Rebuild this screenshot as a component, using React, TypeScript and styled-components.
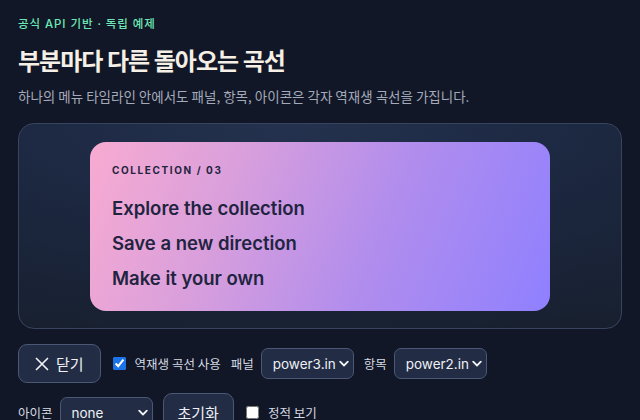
import React, { useState } from "react";
import styled, { createGlobalStyle } from "styled-components";

const Global = createGlobalStyle`
  html, body { margin: 0; padding: 0; background: #111726; }
  body {
    font-family: Inter, "Noto Sans CJK KR", "Noto Sans", sans-serif;
    color: #e5e7eb;
  }
  * { box-sizing: border-box; }
`;

const Page = styled.main`
  padding: 16px 18px 24px;
  display: flex;
  flex-direction: column;
`;

const Eyebrow = styled.div`
  font-size: 11.5px;
  line-height: 16px;
  font-weight: 500;
  letter-spacing: 0.08em;
  color: #6ee7b7;
`;

const Title = styled.h1`
  margin: 12px 0 0;
  font-size: 24px;
  line-height: 32px;
  font-weight: 700;
  letter-spacing: -0.04em;
  color: #f5efe6;
  font-family: "Noto Sans CJK KR", Inter, sans-serif;
`;

const Subtitle = styled.p`
  margin: 10px 0 0;
  font-size: 13.5px;
  line-height: 20px;
  color: #a4aaba;
  letter-spacing: 0;
  font-family: "Noto Sans CJK KR", Inter, sans-serif;
`;

const Stage = styled.section`
  margin-top: 17px;
  height: 206px;
  border: 1px solid #37445e;
  border-radius: 16px;
  background: radial-gradient(120% 110% at 45% 0%, #24324f 0%, #1c2740 45%, #18202f 100%);
  display: flex;
  align-items: center;
  justify-content: center;
`;

const Card = styled.div`
  width: 460px;
  height: 169px;
  border-radius: 16px;
  padding: 20px 22px;
  background: linear-gradient(112deg, #f8abd1 0%, #d99fdc 30%, #b18ded 62%, #8f80ff 100%);
  color: #1f2440;
  display: flex;
  flex-direction: column;
`;

const CardLabel = styled.div`
  font-family: Inter, sans-serif;
  font-size: 10px;
  line-height: 16px;
  font-weight: 700;
  letter-spacing: 0.16em;
`;

const ItemList = styled.ul`
  list-style: none;
  margin: 17px 0 0;
  padding: 0;
  display: flex;
  flex-direction: column;
  gap: 9px;
`;

const Item = styled.li`
  font-family: Inter, sans-serif;
  font-size: 18.5px;
  line-height: 26px;
  font-weight: 600;
  letter-spacing: 0;
`;

const Controls = styled.div`
  margin-top: 15px;
  display: flex;
  flex-wrap: wrap;
  align-items: center;
  column-gap: 10px;
  row-gap: 10px;
  font-family: "Noto Sans CJK KR", Inter, sans-serif;
`;

const Button = styled.button<{ $pad?: number }>`
  height: 39px;
  padding: 0 ${(p) => p.$pad ?? 16}px;
  border-radius: 9px;
  border: 1px solid #4a5775;
  background: #222c44;
  color: #eef0f4;
  font-family: "Noto Sans CJK KR", Inter, sans-serif;
  font-size: 15px;
  display: inline-flex;
  align-items: center;
  gap: 7px;
  cursor: pointer;
`;

const CheckLabel = styled.label`
  display: inline-flex;
  align-items: center;
  gap: 9px;
  font-size: 12.5px;
  color: #d5d9e2;
`;

const Check = styled.input`
  width: 13px;
  height: 13px;
  margin: 0 0 0 2px;
  accent-color: #1a73e8;
`;

const Field = styled.label`
  display: inline-flex;
  align-items: center;
  gap: 7px;
  font-size: 12.5px;
  color: #d5d9e2;
`;

const SelectWrap = styled.span`
  position: relative;
  display: inline-flex;
`;

const Select = styled.select`
  appearance: none;
  width: 93px;
  height: 31px;
  padding: 0 16px 0 11px;
  border-radius: 7px;
  border: 1px solid #4a5775;
  background: #222c44;
  color: #eef0f4;
  font-family: Inter, "Liberation Sans", sans-serif;
  font-size: 13.5px;
`;

const Chevron = styled.svg`
  position: absolute;
  right: 5px;
  top: 50%;
  transform: translateY(-50%);
  pointer-events: none;
`;

function Dropdown({ value, options }: { value: string; options: string[] }) {
  const [v, setV] = useState(value);
  return (
    <SelectWrap>
      <Select value={v} onChange={(e) => setV(e.target.value)}>
        {options.map((o) => (
          <option key={o} value={o}>
            {o}
          </option>
        ))}
      </Select>
      <Chevron width="10" height="7" viewBox="0 0 10 7">
        <path d="M1.2 1.2 L5 5 L8.8 1.2" fill="none" stroke="#eef0f4" strokeWidth="1.8" strokeLinecap="round" strokeLinejoin="round" />
      </Chevron>
    </SelectWrap>
  );
}

const eases = ["none", "power1.in", "power2.in", "power3.in", "power4.in"];

export default function App() {
  return (
    <>
      <Global />
      <Page>
        <Eyebrow>공식 API 기반 · 독립 예제</Eyebrow>
        <Title>부분마다 다른 돌아오는 곡선</Title>
        <Subtitle>하나의 메뉴 타임라인 안에서도 패널, 항목, 아이콘은 각자 역재생 곡선을 가집니다.</Subtitle>
        <Stage>
          <Card>
            <CardLabel>COLLECTION / 03</CardLabel>
            <ItemList>
              <Item>Explore the collection</Item>
              <Item>Save a new direction</Item>
              <Item>Make it your own</Item>
            </ItemList>
          </Card>
        </Stage>
        <Controls>
          <Button $pad={16}>
            <svg width="14" height="14" viewBox="0 0 14 14">
              <path d="M1.5 1.5 L12.5 12.5 M12.5 1.5 L1.5 12.5" stroke="#eef0f4" strokeWidth="1.7" strokeLinecap="round" />
            </svg>
            닫기
          </Button>
          <CheckLabel>
            <Check type="checkbox" defaultChecked />
            역재생 곡선 사용
          </CheckLabel>
          <Field>
            패널
            <Dropdown value="power3.in" options={eases} />
          </Field>
          <Field>
            항목
            <Dropdown value="power2.in" options={eases} />
          </Field>
          <Field>
            아이콘
            <Dropdown value="none" options={eases} />
          </Field>
          <Button $pad={14}>초기화</Button>
          <CheckLabel>
            <Check type="checkbox" />
            정적 보기
          </CheckLabel>
        </Controls>
      </Page>
    </>
  );
}
